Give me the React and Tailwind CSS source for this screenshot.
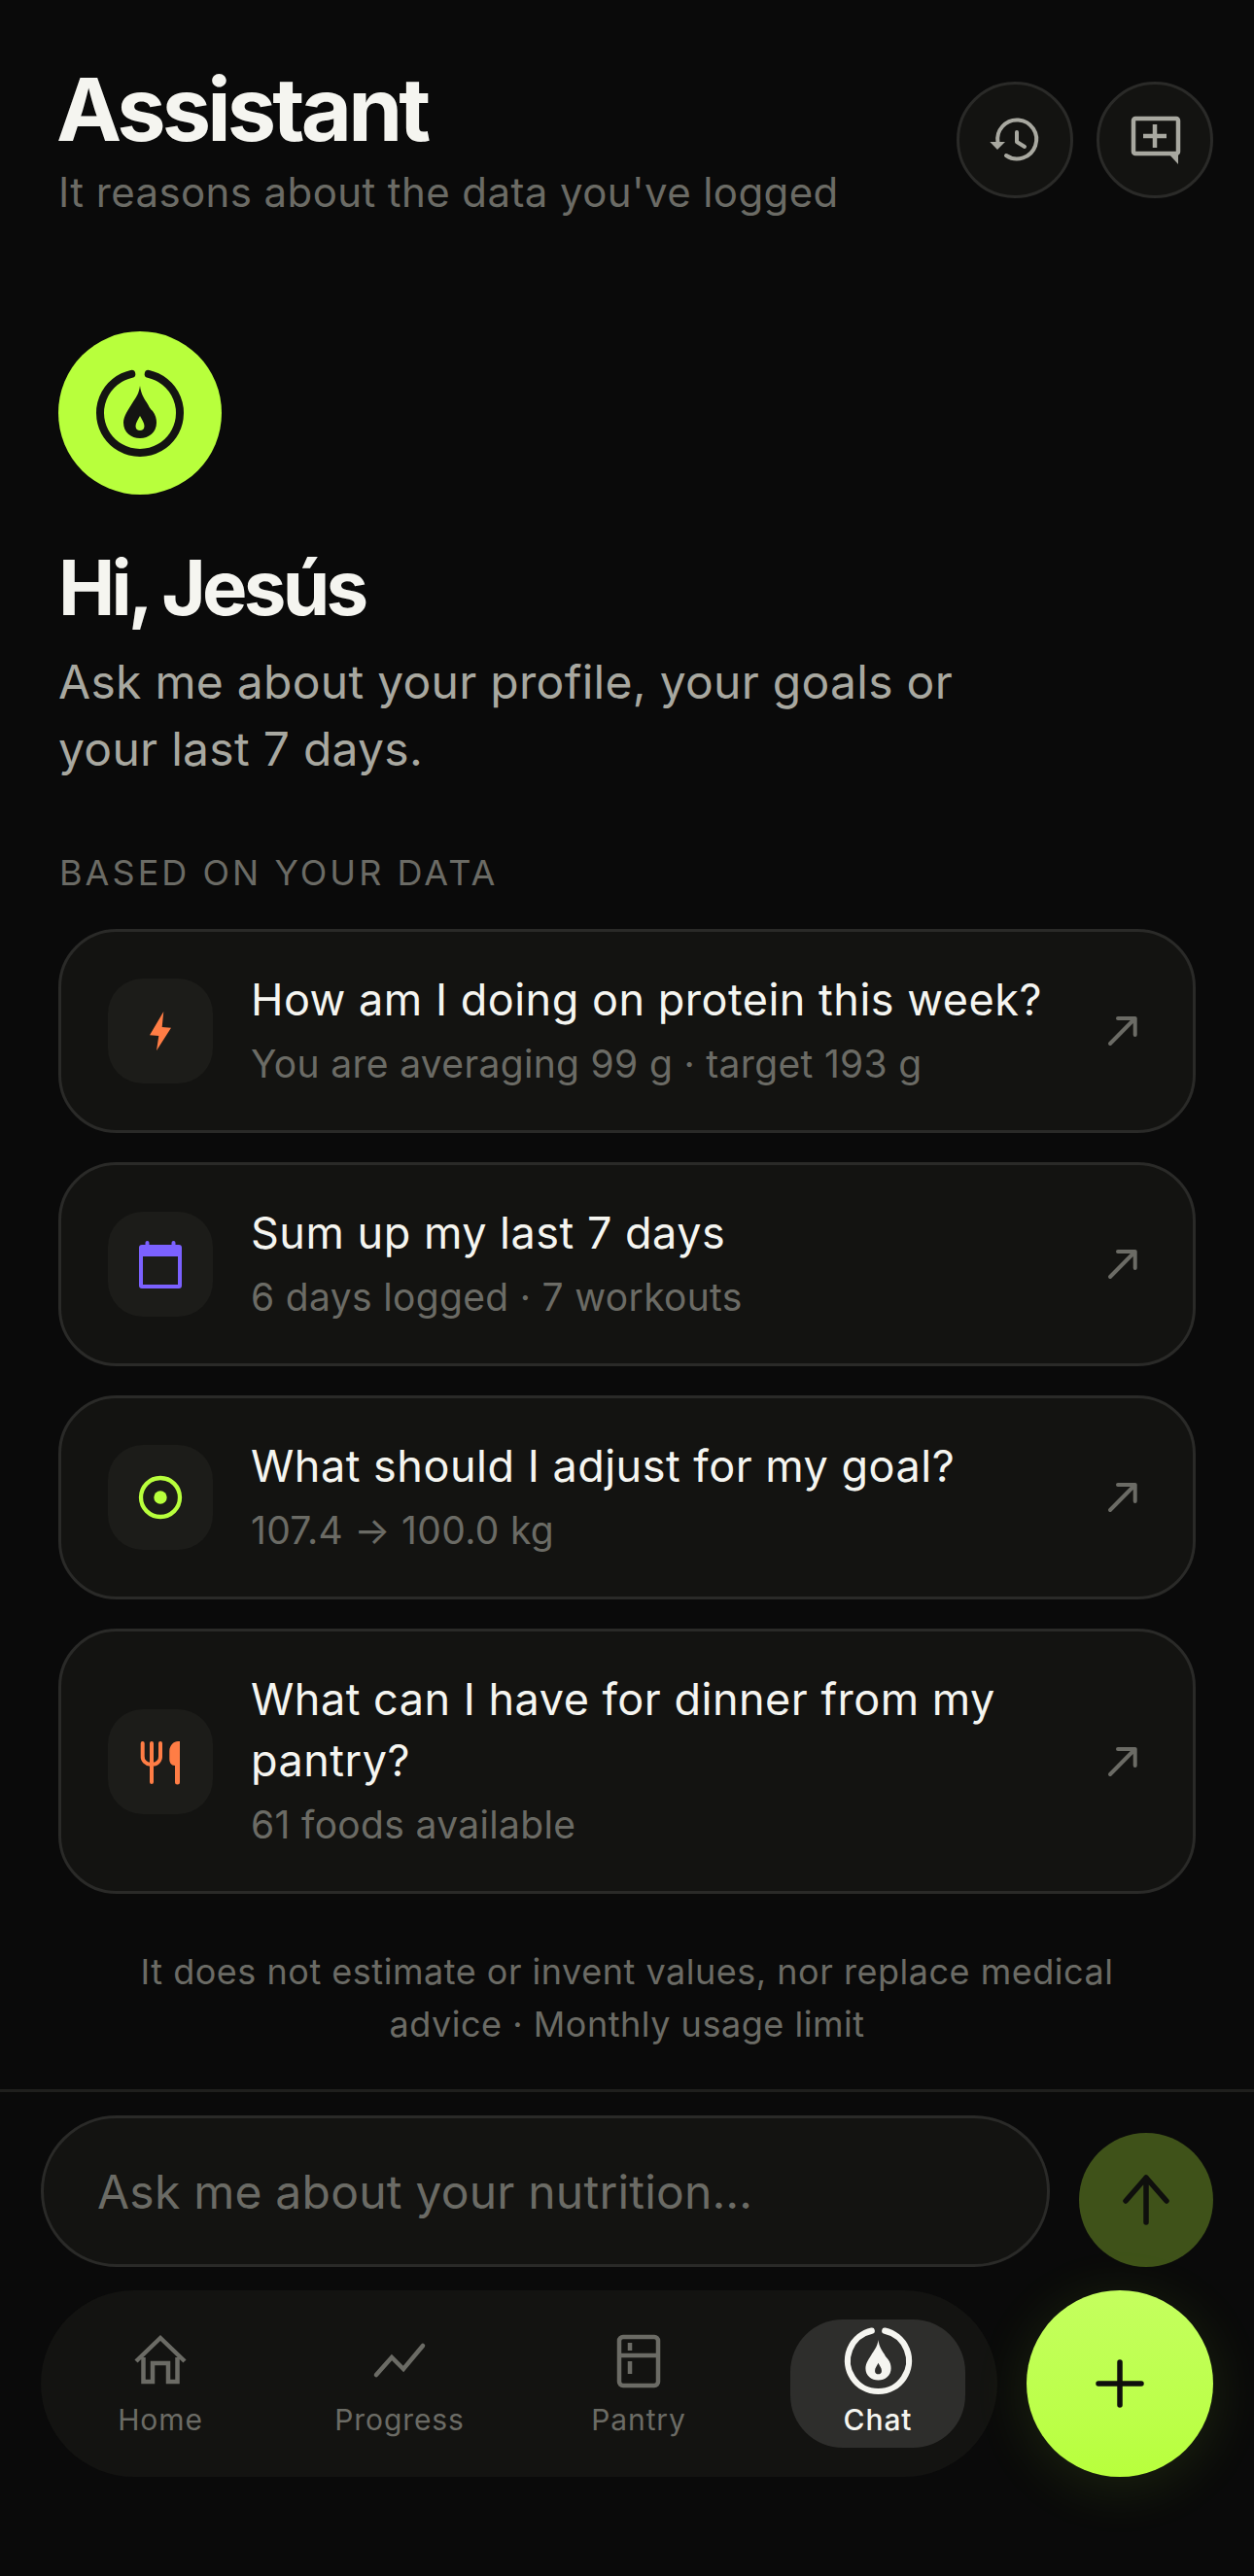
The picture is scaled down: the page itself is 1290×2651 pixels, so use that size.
const font = { fontFamily: 'Inter, "Liberation Sans", sans-serif' };

function Logo({ size, className }) {
  return (
    <svg width={size} height={size} viewBox="-50 -50 100 100" className={className}>
      <path d="M-8.700 -40.100A41 41 0 1 0 8.700 -40.100" fill="none" stroke="currentColor" strokeWidth="8" strokeLinecap="round" />
      <path
        fillRule="evenodd"
        fill="currentColor"
        d="M0 -28C1 -19 5 -14 8 -9C10 -5 11 -4 13 -2C16 2 17 6 17 10C17 20 9 26 0 26C-9 26 -17 20 -17 10C-17 3 -12 -3 -8 -10C-4 -16 -1 -20 0 -28ZM0 3C-2 7 -4.500 10 -4.500 13.500C-4.500 16.500 -2.500 18 0 18C2.500 18 4.500 16.500 4.500 13.500C4.500 10 2 7 0 3Z"
      />
    </svg>
  );
}

function IconBox({ children }) {
  return (
    <div className="w-[108px] h-[108px] shrink-0 rounded-[36px] bg-[#1c1c19] flex items-center justify-center">
      <svg width="60" height="60" viewBox="-30 -30 60 60">{children}</svg>
    </div>
  );
}

const Bolt = () => <polygon fill="#ff7d45" points="3.300,-20 -11,4.300 -1.700,5 -4,20.300 11,-3.300 1.700,-4" />;
const Calendar = () => (
  <g fill="#7b61ff">
    <path fillRule="evenodd" d="M-19 -20H19A3 3 0 0 1 22 -17V22A3 3 0 0 1 19 25H-19A3 3 0 0 1 -22 22V-17A3 3 0 0 1 -19 -20ZM-18 -8V21H18V-8Z" />
    <rect x="-15.500" y="-24" width="4" height="6" rx="2" />
    <rect x="11.500" y="-24" width="4" height="6" rx="2" />
  </g>
);
const Target = () => (
  <g>
    <circle cx="0" cy="0" r="20" fill="none" stroke="#b8ff3c" strokeWidth="4.300" />
    <circle cx="0" cy="0" r="6.700" fill="#b8ff3c" />
  </g>
);
const Cutlery = () => (
  <g>
    <path d="M-18.300 -19V-6A8 8 0 0 0 -10 2.700H-8A8 8 0 0 0 0 -6V-19M-9 -19V21" fill="none" stroke="#ff7d45" strokeWidth="4" strokeLinecap="round" />
    <path fill="#ff7d45" d="M20 -21V21A2.500 2.500 0 0 1 15 21V4C11 4 9.300 1 9.300 -3V-11C9.300 -17 14 -21 18 -21Z" />
  </g>
);

function Card({ icon, title, sub }) {
  return (
    <div className="flex items-center rounded-[60px] border-[3px] border-[#2a2a28] bg-[#131311] pl-[48px] pr-[48px] py-[38px]">
      <IconBox>{icon}</IconBox>
      <div className="ml-[39px] flex-1 min-w-0">
        <div className="text-[45px] leading-[63px] tracking-[0.5px] text-[#f5f5f0] font-normal">{title}</div>
        <div className="mt-[5px] text-[39px] leading-[60px] tracking-[0.33px] text-[#6b6b65]">{sub}</div>
      </div>
      <svg width="42" height="42" viewBox="0 0 42 42" className="shrink-0 ml-[10px]" fill="none" stroke="#6b6b65" strokeWidth="4" strokeLinecap="round" strokeLinejoin="round">
        <path d="M5 34L30.700 8M13 8H30.700V25" />
      </svg>
    </div>
  );
}

function NavItem({ label, active, children }) {
  return (
    <div className={`w-[180px] h-[132px] rounded-[54px] flex flex-col items-center ${active ? "bg-[#2e2e2c] text-[#f5f5f0] font-medium" : "text-[#6b6b65]"}`}>
      <div className="h-[85px] w-full flex items-center justify-center">{children}</div>
      <div className="text-[30px] leading-[36px] tracking-[0.9px]">{label}</div>
    </div>
  );
}

export default function App() {
  return (
    <div style={font} className="w-[1290px] h-[2651px] bg-[#0a0a0a] flex flex-col overflow-hidden">
      <header className="flex justify-between pl-[60px] pr-[42px] pt-[60px]">
        <div>
          <h1 className="text-[90px] leading-[105px] font-bold tracking-[-3.9px] -ml-[2px] text-[#f5f5f0]">Assistant</h1>
          <p className="mt-[3px] text-[42px] leading-[60px] tracking-[0.4px] text-[#6b6b65]">It reasons about the data you've logged</p>
        </div>
        <div className="flex gap-[24px] pt-[24px]">
          <button className="w-[120px] h-[120px] rounded-full border-[3px] border-[#2a2a28] bg-[#131311] flex items-center justify-center">
            <svg width="60" height="60" viewBox="-30 -30 60 60" fill="none" stroke="#a8a8a0" strokeWidth="4" strokeLinecap="round" strokeLinejoin="round">
              <path d="M-17.500 3A20 20 0 1 1 -9 16" />
              <path d="M-25.700 2H-10L-18 10Z" fill="#a8a8a0" stroke="none" />
              <path d="M2 -8V2L10 7" />
            </svg>
          </button>
          <button className="w-[120px] h-[120px] rounded-full border-[3px] border-[#2a2a28] bg-[#131311] flex items-center justify-center">
            <svg width="60" height="60" viewBox="-30 -30 60 60" fill="none" stroke="#a8a8a0" strokeWidth="4.500" strokeLinejoin="round">
              <rect x="-22" y="-22" width="46" height="36" rx="2" />
              <path d="M14 14L24 25V12Z" fill="#a8a8a0" stroke="none" />
              <path d="M0 -16V8M-12 -4H12" />
            </svg>
          </button>
        </div>
      </header>

      <main className="flex-1 px-[60px] pt-[113px]">
        <div className="w-[168px] h-[168px] rounded-full bg-[#b8ff3c] text-[#141412] flex items-center justify-center">
          <Logo size={100} />
        </div>
        <h2 className="mt-[51px] text-[78px] leading-[90px] font-bold tracking-[-3.8px] text-[#f5f5f0]">Hi, Jesús</h2>
        <p className="mt-[17px] text-[48px] leading-[69px] tracking-[0.28px] text-[#a8a8a0] w-[1000px]">Ask me about your profile, your goals or your last 7 days.</p>
        <div className="mt-[69px] ml-[1px] text-[36px] leading-[48px] tracking-[3.05px] text-[#6b6b65]">BASED ON YOUR DATA</div>
        <div className="mt-[34px] flex flex-col gap-[30px]">
          <Card icon={<Bolt />} title="How am I doing on protein this week?" sub="You are averaging 99 g · target 193 g" />
          <Card icon={<Calendar />} title="Sum up my last 7 days" sub="6 days logged · 7 workouts" />
          <Card icon={<Target />} title="What should I adjust for my goal?" sub="107.4 → 100.0 kg" />
          <Card icon={<Cutlery />} title="What can I have for dinner from my pantry?" sub="61 foods available" />
        </div>
        <p className="mt-[53px] text-center text-[36px] leading-[54px] tracking-[0.52px] text-[#6b6b65] px-[60px]">It does not estimate or invent values, nor replace medical advice · Monthly usage limit</p>
      </main>

      <footer className="border-t-[3px] border-[#1f1f1d] px-[42px] pt-[24px] pb-[102px]">
        <div className="flex items-end gap-[30px] pr-0">
          <div className="flex-1 h-[156px] rounded-full border-[3px] border-[#2a2a28] bg-[#131311] pl-[55px] pt-[2px] flex items-center text-[48px] tracking-[0.22px] text-[#6b6b65]">
            Ask me about your nutrition…
          </div>
          <button className="w-[138px] h-[138px] rounded-full bg-[#3f5219] flex items-center justify-center">
            <svg width="60" height="60" viewBox="-30 -30 60 60" fill="none" stroke="#0f0f0d" strokeWidth="5.500" strokeLinecap="round" strokeLinejoin="round">
              <path d="M0 23V-23M-21 1L0 -23L21 1" />
            </svg>
          </button>
        </div>
        <div className="mt-[24px] flex gap-[30px]">
          <nav className="flex-1 h-[192px] rounded-full bg-[#131311] px-[33px] flex items-center justify-between">
            <NavItem label="Home">
              <svg width="60" height="60" viewBox="0 0 60 60" fill="none" stroke="currentColor" strokeWidth="4.500">
                <path d="M5 30L30 6L55 30M12.500 26V51H22V32H38V51H47.500V26" strokeLinejoin="miter" />
              </svg>
            </NavItem>
            <NavItem label="Progress">
              <svg width="60" height="60" viewBox="0 0 60 60" fill="none" stroke="currentColor" strokeWidth="4.500" strokeLinecap="round">
                <path d="M6 44L22 26L34 38L54 14" />
              </svg>
            </NavItem>
            <NavItem label="Pantry">
              <svg width="60" height="60" viewBox="0 0 60 60" fill="none" stroke="currentColor" strokeWidth="4.500">
                <rect x="10" y="5" width="40" height="50" rx="4" />
                <path d="M10 24H50M21 11V19M21 30V43" />
              </svg>
            </NavItem>
            <NavItem label="Chat" active>
              <Logo size={77} />
            </NavItem>
          </nav>
          <button className="w-[192px] h-[192px] rounded-full bg-gradient-to-b from-[#c4ff5e] to-[#b8ff3c] shadow-[0_9px_60px_rgba(184,255,60,0.11)] flex items-center justify-center">
            <svg width="60" height="60" viewBox="-30 -30 60 60" fill="none" stroke="#0f0f0d" strokeWidth="5.500" strokeLinecap="round">
              <path d="M0 -22V22M-22 0H22" />
            </svg>
          </button>
        </div>
      </footer>
    </div>
  );
}
